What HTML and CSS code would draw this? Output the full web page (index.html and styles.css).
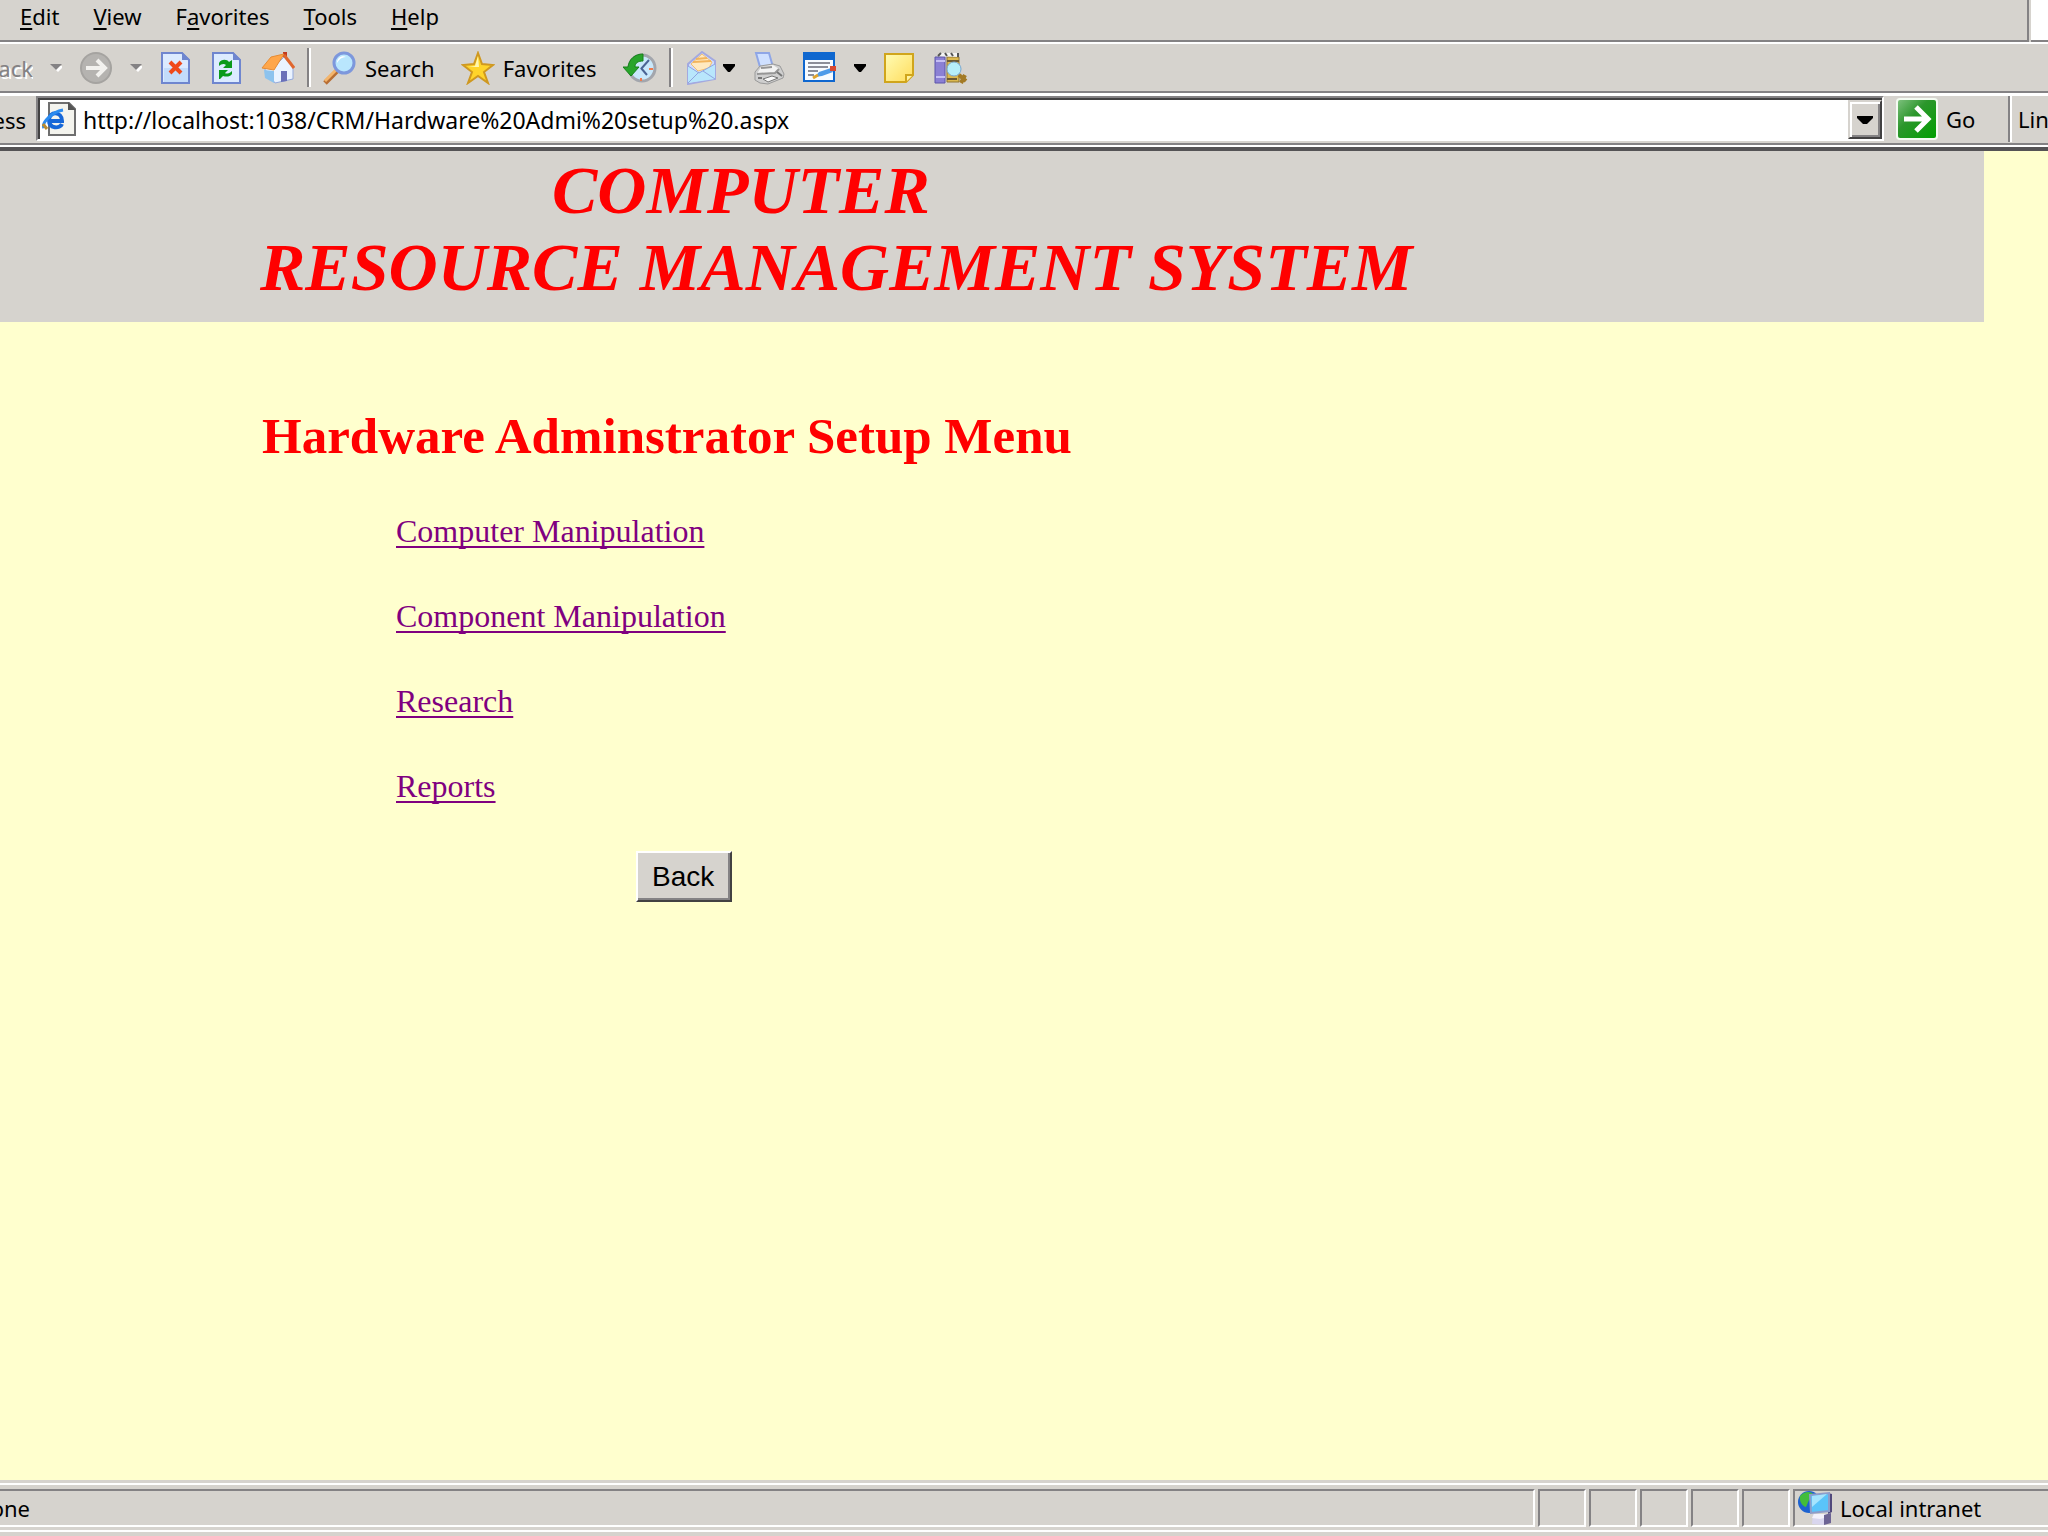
FILE: index.html
```
<!DOCTYPE html>
<html lang="en">
<head>
    <meta charset="UTF-8">
    <meta name="viewport" content="width=device-width, initial-scale=1.0">
    <title>Hardware Administrator Setup</title>
    <link rel="stylesheet" href="styles.css">
</head>
<body>
    <div class="menu-row">
        <nav class="menu">
            <button><u>E</u>dit</button>
            <button><u>V</u>iew</button>
            <button>F<u>a</u>vorites</button>
            <button><u>T</u>ools</button>
            <button><u>H</u>elp</button>
        </nav>
        <div class="throbber"></div>
    </div>

    <div class="toolbar">
        <div class="tools">
            <button class="cut back-label" disabled><span>Back</span></button>
            <button class="arrow" aria-label="Back history" disabled>
                <svg width="12" height="8" viewBox="0 0 12 8"><path d="M2 2h12L8 8z" fill="#fff"/><path d="M0 0h12L6 6z" fill="#848284"/></svg>
            </button>
            <button aria-label="Forward" disabled>
                <svg width="34" height="34" viewBox="0 0 34 34"><circle cx="17" cy="17" r="16" fill="#a5a3a0"/><circle cx="17" cy="17" r="14" fill="#b5b3b0"/><path d="M7 17h18M18 9l8 8-8 8" fill="none" stroke="#f2f1ee" stroke-width="4"/></svg>
            </button>
            <button class="arrow" aria-label="Forward history" disabled>
                <svg width="12" height="8" viewBox="0 0 12 8"><path d="M2 2h12L8 8z" fill="#fff"/><path d="M0 0h12L6 6z" fill="#848284"/></svg>
            </button>
            <button aria-label="Stop">
                <svg width="34" height="34" viewBox="0 0 34 34"><path d="M3 2h20l7 7v23H3z" fill="#dcebff" stroke="#6f86cf" stroke-width="2"/><path d="M5 17h24v14H5z" fill="#c3dcfb"/><path d="M23 1v8h8z" fill="#6f86cf"/><path d="M11 11l11 11M22 11L11 22" stroke="#f04a1c" stroke-width="4"/></svg>
            </button>
            <button aria-label="Refresh">
                <svg width="34" height="34" viewBox="0 0 34 34"><path d="M3 2h20l7 7v23H3z" fill="#dcebff" stroke="#6f86cf" stroke-width="2"/><path d="M23 1v8h8z" fill="#6f86cf"/><path d="M9 15v-3c2-4 8-4 10-1l3-2v8h-9l3-3c-2-2-5-1-7 1zM22 19v4c-2 3-6 3-9 2l-3 3h12v-3M9 19h9l-3 3c1 1 4 1 7-2v8H9z" fill="#0a9a1a"/></svg>
            </button>
            <button aria-label="Home">
                <svg width="34" height="34" viewBox="0 0 34 34"><path d="M22 1h4v10h-4z" fill="#c23a1e"/><path d="M3 17l11 15 18-4V16L23 6 11 18z" fill="#eaf3ff" stroke="#93a9dc"/><path d="M3 19l10 1v12L4 27z" fill="#8dc3ee"/><path d="M1 17L10 6l13-3-10 16z" fill="#ffa64a" stroke="#e58b34"/><path d="M23 4l10 13" stroke="#e0662e" stroke-width="3"/><path d="M20 20h6v10l-6 1z" fill="#6a70b8"/></svg>
            </button>
        </div>
        <div class="sep"></div>
        <div class="tools tools-labelled">
            <button class="with-label">
                <svg width="34" height="34" viewBox="0 0 34 34"><path d="M2 32l12-12" stroke="#b86e33" stroke-width="5"/><path d="M2 30l11-11" stroke="#f4b56b" stroke-width="3"/><circle cx="21" cy="12" r="10" fill="#b9e6fd" stroke="#7d97dc" stroke-width="3"/><path d="M14 12c0-5 5-8 9-6-4 0-7 2-9 6z" fill="#fff"/></svg>
                <span>Search</span>
            </button>
            <button class="with-label">
                <svg width="34" height="34" viewBox="0 0 34 34"><path d="M17 2l4 11 11 1-9 7 4 11-10-7-10 7 4-11-9-7 11-1z" fill="#ffd42a" stroke="#cf9820" stroke-width="2"/><path d="M17 5l1 11-11 0 7-1z" fill="#fff7b0"/></svg>
                <span>Favorites</span>
            </button>
            <button aria-label="History">
                <svg width="34" height="34" viewBox="0 0 34 34"><circle cx="19" cy="17" r="13" fill="#c9e8fb" stroke="#a3a6ad" stroke-width="3"/><path d="M18 18l8-9M18 17l6 7" stroke="#4a6494" stroke-width="2"/><path d="M26 18h4M18 27v3" stroke="#ee7b4e" stroke-width="2"/><path d="M20 3C12 3 6 8 5 16H0l8 9 8-9h-4c0-4 3-6 8-6z" fill="#28a52b" stroke="#168019"/></svg>
            </button>
        </div>
        <div class="sep"></div>
        <div class="tools">
            <button class="mail" aria-label="Mail">
                <svg width="34" height="34" viewBox="0 0 34 34"><path d="M3 13L17 1l13 9v18L3 33z" fill="#cfdcff" stroke="#a3a9e0" stroke-width="2"/><path d="M6 13l11-10 10 8-3 6-11 3z" fill="#ffe9c0" stroke="#f0be72"/><path d="M11 8l11-1M8 11l18-1" stroke="#f2b45c" stroke-width="2"/><path d="M3 15l11 7 16-9v15L3 32z" fill="#b8e6fc"/><path d="M3 15l11 7 16-9M3 32l11-11M30 28l-12-8" fill="none" stroke="#8fa4e0"/></svg>
                <svg width="12" height="8" viewBox="0 0 12 8"><path d="M0 0h12v2L7 8H5L0 2z" fill="#000"/></svg>
            </button>
            <button aria-label="Print">
                <svg width="34" height="34" viewBox="0 0 34 34"><path d="M4 2h13l4 14H8z" fill="#cfe0ff" stroke="#8fa6e6" stroke-width="2"/><path d="M8 15l-5 6v8l5 3 8 1 15-6 1-4-4-8-7-2z" fill="#cfcfcf" stroke="#9a9a9a"/><path d="M9 16l12-2 6 4-4 4-18 1z" fill="#f3f3f3"/><path d="M9 17l11-1M5 23l18-1 4-4" fill="none" stroke="#969696" stroke-width="2"/><path d="M11 28l9-3 6 2-10 4z" fill="#fafafa" stroke="#777"/><path d="M25 21l5 4M6 27h4" stroke="#777" stroke-width="2"/></svg>
            </button>
            <button aria-label="Edit page">
                <svg width="34" height="34" viewBox="0 0 34 34"><path d="M1 2h30v28H1z" fill="#f7fbff" stroke="#0f67cf" stroke-width="2"/><path d="M0 1h32v8H0z" fill="#0f67cf"/><path d="M5 12h22M5 16h20M5 20h10M5 24h6" stroke="#8b8e99" stroke-width="2"/><path d="M12 26l4-5 12-4 2 4-11 4z" fill="#4d9be9"/><path d="M10 27l5-3" stroke="#e0a32c" stroke-width="3"/><path d="M27 15h6v5h-6z" fill="#d94a31"/></svg>
            </button>
            <button class="arrow" aria-label="Edit options">
                <svg width="12" height="8" viewBox="0 0 12 8"><path d="M0 0h12v2L7 8H5L0 2z" fill="#000"/></svg>
            </button>
            <button aria-label="Discuss">
                <svg width="34" height="34" viewBox="0 0 34 34"><defs><linearGradient id="note" x1="0" y1="0" x2="1" y2="1"><stop offset="0" stop-color="#fffcb4"/><stop offset="1" stop-color="#ffdc5c"/></linearGradient></defs><path d="M2 3h28v21l-7 7H2z" fill="url(#note)" stroke="#d0a51c" stroke-width="2"/><path d="M23 31v-7h7" fill="#fff3a0" stroke="#d0a51c" stroke-width="2"/></svg>
            </button>
            <button aria-label="Research">
                <svg width="34" height="34" viewBox="0 0 34 34"><path d="M1 6h10v26H1z" fill="#8b80d4" stroke="#5d55aa"/><path d="M2 10h9M2 26h9" stroke="#c5bef4" stroke-width="2"/><path d="M13 6h12v25H13z" fill="#dcb950" stroke="#8f7430"/><path d="M13 10h12M13 28h10" stroke="#6b5a34" stroke-width="2"/><path d="M3 5l4-3h18v4z" fill="#f4f4f4"/><path d="M4 5l3-3M11 2l2 3M17 2l2 3M24 2v4" stroke="#555" stroke-width="2"/><circle cx="20" cy="18" r="7" fill="#b6effa" stroke="#7aa7d0"/><path d="M25 24l7 6M31 24l-4 8" stroke="#a37a25" stroke-width="4"/></svg>
            </button>
        </div>
    </div>

    <form class="address-bar">
        <label class="cut address-label" for="address"><span>Address</span></label>
        <div class="address-box">
            <svg width="34" height="38" viewBox="0 0 34 38"><path d="M7 3h20l6 6v26H7z" fill="#f4f4ee" stroke="#6f6f6f" stroke-width="2"/><path d="M26 2v8h8z" fill="#555"/><path d="M20 24c-2 5-13 5-13-4s13-9 13 1H9" fill="none" stroke="#1768d8" stroke-width="4"/><path d="M2 28c-3-5 8-16 19-18" fill="none" stroke="#2c8cf0" stroke-width="3"/><path d="M1 24l4 5" stroke="#b98b30" stroke-width="3"/></svg>
            <input id="address" type="text" value="http://localhost:1038/CRM/Hardware%20Admi%20setup%20.aspx">
            <button type="button" class="drop" aria-label="Show addresses">
                <svg width="16" height="8" viewBox="0 0 16 8"><path d="M0 0h16v2l-6 6H6L0 2z" fill="#000"/></svg>
            </button>
        </div>
        <button type="button" class="go">
            <svg width="42" height="42" viewBox="0 0 42 42"><defs><linearGradient id="go" x1="0" y1="0" x2="1" y2="1"><stop offset="0" stop-color="#7cc07c"/><stop offset="0.4" stop-color="#2c962c"/><stop offset="1" stop-color="#00a000"/></linearGradient></defs><rect width="42" height="42" rx="4" fill="#f4fbf2"/><rect x="2" y="2" width="38" height="38" rx="2" fill="url(#go)"/><path d="M8 21h24M20 9l12 12-12 12" fill="none" stroke="#fff" stroke-width="5"/></svg>
            <span>Go</span>
        </button>
        <button type="button" class="links">Links</button>
    </form>

    <main class="page">
        <header class="banner">
            <h1>COMPUTER<br>RESOURCE MANAGEMENT SYSTEM</h1>
        </header>
        <section class="content">
            <h2>Hardware Adminstrator Setup Menu</h2>
            <ul class="setup-menu">
                <li><a href="#">Computer Manipulation</a></li>
                <li><a href="#">Component Manipulation</a></li>
                <li><a href="#">Research</a></li>
                <li><a href="#">Reports</a></li>
            </ul>
            <button class="back">Back</button>
        </section>
    </main>

    <footer class="status-bar">
        <div class="panel status-text"><span class="cut"><span>Done</span></span></div>
        <div class="panel small"></div>
        <div class="panel small"></div>
        <div class="panel small"></div>
        <div class="panel small"></div>
        <div class="panel small"></div>
        <div class="panel zone">
            <svg width="34" height="34" viewBox="0 0 34 34"><circle cx="11" cy="11" r="11" fill="#1d62d0"/><path d="M2 5c4-5 11-5 13-2l-4 6-3 7C4 15 1 10 2 5z" fill="#43bd3b"/><path d="M30 2l4 1v18l-4 2z" fill="#51497c"/><path d="M12 4l19-2v18l-18 2z" fill="#5ac4fa" stroke="#8e9cc9" stroke-width="2"/><path d="M14 5l15-2-15 13z" fill="#a6e4fd"/><path d="M15 23h13l5 3v5l-8 3-11-1z" fill="#d9d6ee"/><path d="M16 23h12l2 3-8 2-8-1z" fill="#f3f1fb"/><path d="M26 24l7-2v10l-7 2z" fill="#6d6494"/></svg>
            <span>Local intranet</span>
        </div>
    </footer>
</body>
</html>
```

FILE: styles.css
```
* {
    box-sizing: border-box;
}
body {
    margin: 0;
    min-height: 100vh;
    display: flex;
    flex-direction: column;
    background-color: #d6d3ce;
    color: black;
    font-family: "Noto Sans", Tahoma, sans-serif;
    font-size: 22px;
    line-height: 28px;
    overflow-x: hidden;
}
button {
    margin: 0;
    padding: 0;
    border: none;
    background: none;
    color: black;
    font: inherit;
    white-space: nowrap;
}
svg {
    display: block;
    flex-shrink: 0;
}
u {
    text-decoration-thickness: 2px;
    text-underline-offset: 3px;
}

/* labels running off the left edge */
.cut {
    display: flex;
    justify-content: flex-end;
    overflow: hidden;
}

.menu-row {
    display: flex;
    height: 44px;
    border-bottom: 2px solid white;
}
.menu {
    flex: 1;
    display: flex;
    align-items: flex-start;
    gap: 34px;
    padding: 2px 20px;
    border-right: 2px solid #848284;
    border-bottom: 2px solid #848284;
}
.throbber {
    width: 17px;
    margin-left: 2px;
    background-color: white;
    border-bottom: 2px solid #848284;
}

.toolbar {
    display: flex;
    align-items: center;
    height: 49px;
    border-bottom: 2px solid #848284;
}
.tools {
    display: flex;
    align-items: center;
    gap: 17px;
}
.tools-labelled {
    gap: 26px;
}
.tools button {
    display: flex;
    align-items: center;
}
.tools .back-label {
    justify-content: flex-end;
    width: 33px;
    color: #848284;
    text-shadow: 2px 2px white;
}
.tools .with-label {
    gap: 8px;
}
.tools .mail {
    gap: 4px;
}
.sep {
    width: 4px;
    height: 39px;
    margin: 0 12px;
    border-left: 2px solid #848284;
    border-right: 2px solid white;
}

.address-bar {
    display: flex;
    height: 58px;
    margin: 0;
    padding-top: 3px;
    border-bottom: 4px solid #555355;
    box-shadow: inset 0 3px white, inset 0 -2px white, inset 0 -4px #848284;
}
.address-label {
    width: 26px;
    padding-top: 10px;
}
.address-box {
    flex: 1;
    display: flex;
    align-items: center;
    height: 45px;
    margin-left: 10px;
    padding: 0 0 0 4px;
    background-color: white;
    border: 2px solid #848284;
    border-right-color: white;
    border-bottom-color: white;
    box-shadow: inset 2px 2px #424142;
}
.address-box input {
    flex: 1;
    margin-left: 7px;
    padding: 3px 0 0;
    border: none;
    outline: none;
    background: none;
    color: black;
    font: inherit;
    font-size: 23px;
}
.drop {
    display: flex;
    align-items: center;
    justify-content: center;
    align-self: flex-end;
    width: 34px;
    height: 39px;
    background-color: #d6d3ce;
    border: 2px solid;
    border-color: #d6d3ce #424142 #424142 #d6d3ce;
    box-shadow: inset 2px 2px white, inset -2px -2px #848284;
}
.go {
    display: flex;
    align-items: center;
    gap: 8px;
    width: 124px;
    height: 46px;
    padding-left: 12px;
}
.links {
    width: 40px;
    height: 46px;
    padding: 0 0 0 8px;
    border-left: 2px solid #848284;
    box-shadow: inset 2px 0 white;
    text-align: left;
    overflow: hidden;
}

.page {
    flex: 1;
    background-color: #ffffce;
    font-family: "Liberation Serif", "Times New Roman", serif;
}
.banner {
    margin-right: 64px;
    padding: 1px 0 16px 260px;
    background-color: #d6d3ce;
}
h1 {
    margin: 0;
    color: red;
    font-size: 68px;
    font-style: italic;
    line-height: 77px;
    text-indent: 292px;
}
.content {
    padding: 84px 0 0 262px;
}
h2 {
    margin: 0 0 23px;
    color: red;
    font-size: 51px;
    line-height: 60px;
}
.setup-menu {
    margin: 0 0 22px;
    padding-left: 134px;
    list-style: none;
    font-size: 32px;
    line-height: 85px;
}
.setup-menu a {
    color: #800080;
    text-decoration-thickness: 2px;
    text-underline-offset: 4px;
    text-decoration-skip-ink: none;
}
.back {
    display: block;
    height: 51px;
    margin-left: 374px;
    padding: 0 16px 0 14px;
    background-color: #d6d3ce;
    border: 2px solid;
    border-color: white #424142 #424142 white;
    box-shadow: inset -2px -2px #848284;
    font-family: "Liberation Sans", Arial, sans-serif;
    font-size: 28px;
}

.status-bar {
    display: flex;
    gap: 3px;
    height: 56px;
    padding: 9px 0 5px;
    box-shadow: inset 0 3px #d6d3ce, inset 0 5px white;
    border-bottom: 4px solid #d6d3ce;
    background: linear-gradient(white, white) bottom / 100% 2px no-repeat;
}
.panel {
    display: flex;
    align-items: center;
    border: 2px solid;
    border-color: #848284 white white #848284;
}
.status-text {
    flex: 1;
    border-left: none;
}
.status-text .cut {
    width: 30px;
}
.small {
    width: 48px;
}
.zone {
    width: 255px;
    gap: 8px;
    padding-left: 3px;
    border-right: none;
    white-space: nowrap;
}
```
